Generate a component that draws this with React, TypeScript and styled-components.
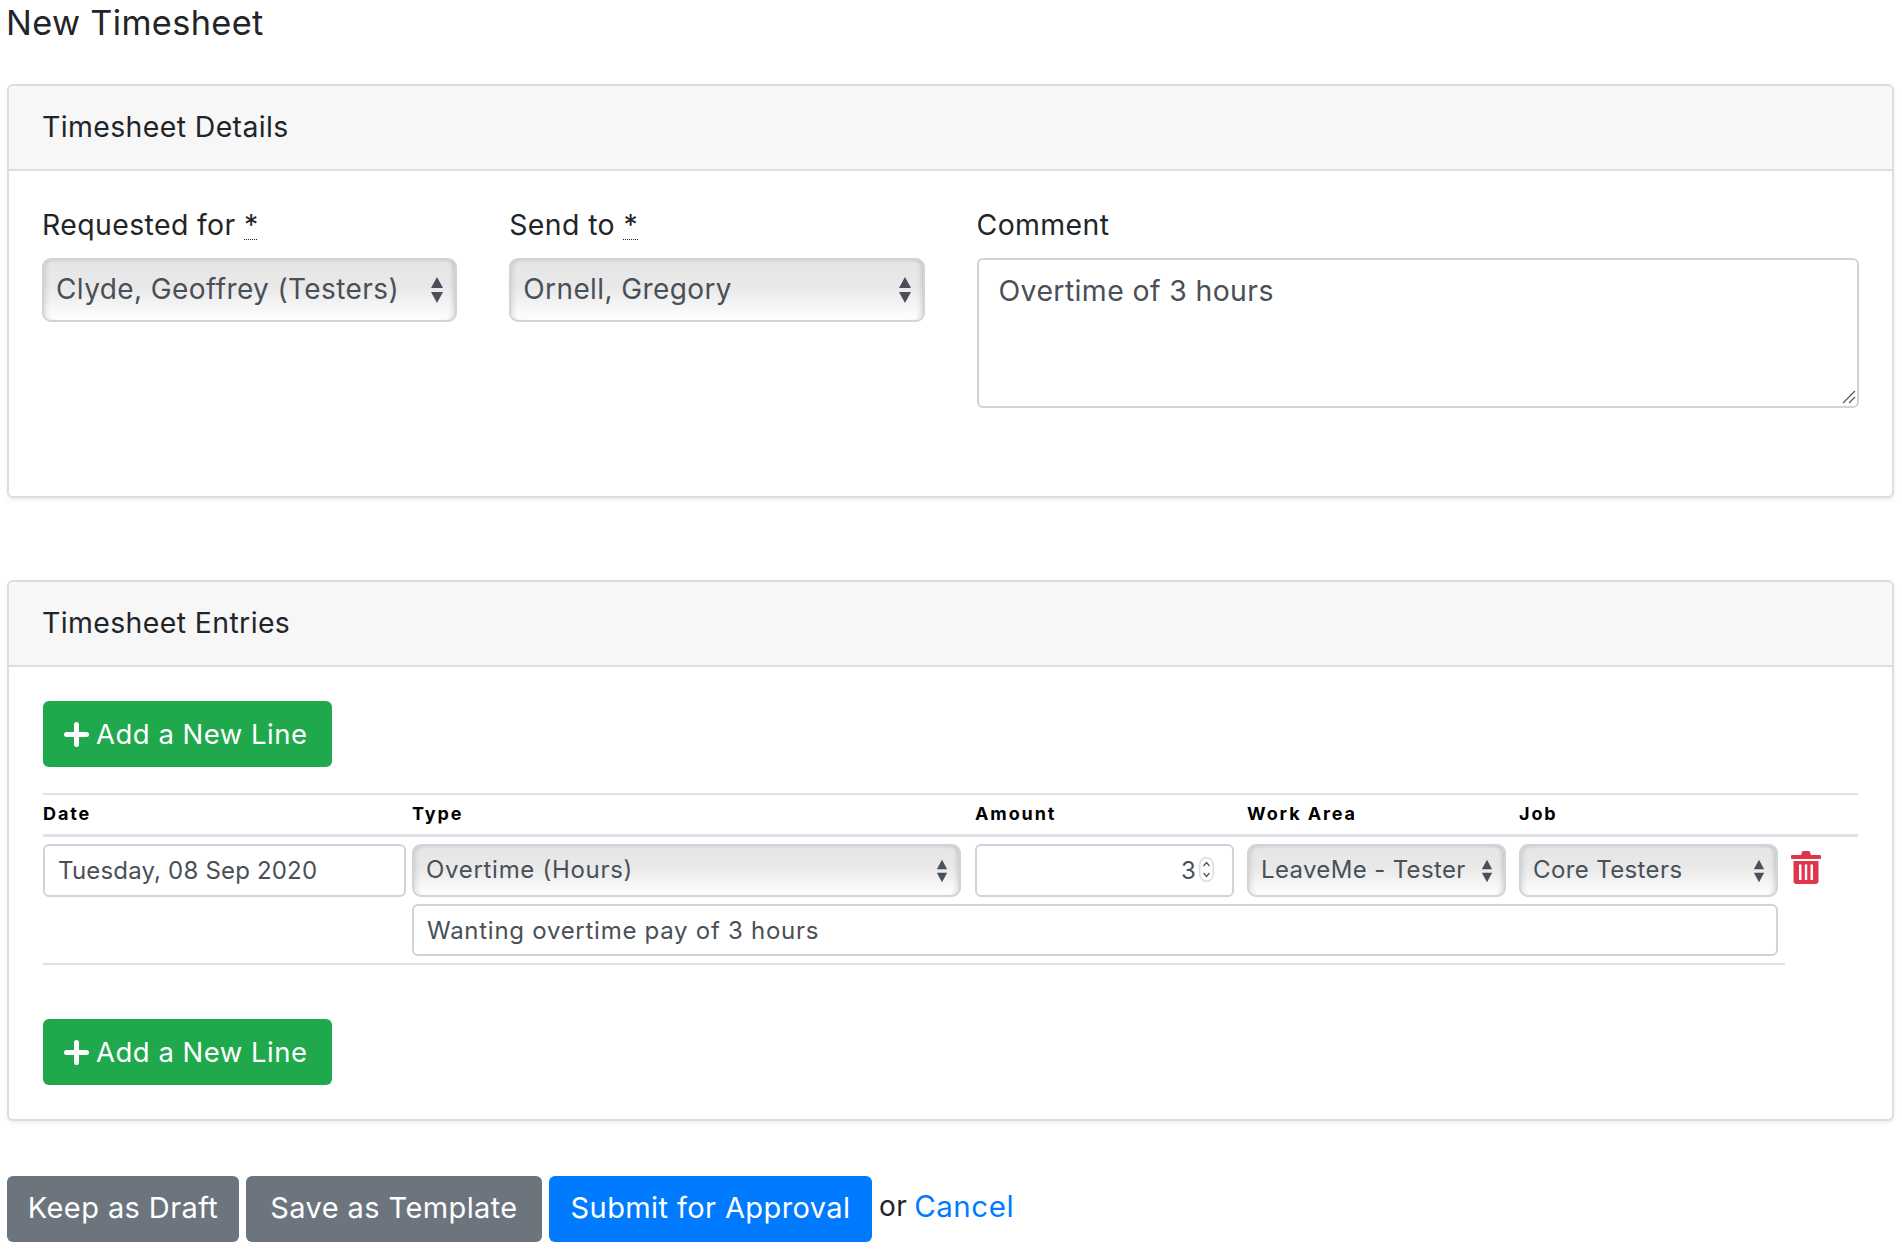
import React from "react";
import styled, { createGlobalStyle } from "styled-components";

const FONT = `Inter, "Noto Sans", "Liberation Sans", sans-serif`;

const Global = createGlobalStyle`
  html, body { margin: 0; padding: 0; background: #fff; }
  body { font-family: ${FONT}; color: #212529; }
  * { box-sizing: border-box; }
`;

const Page = styled.main`
  padding: 0 8px 7px 7px;
`;

const Title = styled.h1`
  margin: 0 0 38px -1px;
  font-size: 34.3px;
  font-weight: 400;
  line-height: 46px;
  letter-spacing: 0.35px;
  color: #212529;
`;

const Card = styled.section`
  border: 2px solid #dcdddd;
  border-radius: 6px;
  box-shadow: 0 2px 4px rgba(0, 0, 0, 0.07);
  background: #fff;
  overflow: hidden;
  & + & { margin-top: 82px; }
`;

const CardHeader = styled.h2`
  margin: 0;
  height: 85px;
  padding: 0 33px 2px;
  display: flex;
  align-items: center;
  background: #f7f7f7;
  border-bottom: 2px solid #dcdddd;
  font-size: 28.4px;
  font-weight: 400;
  letter-spacing: 0.4px;
  color: #212529;
`;

const DetailsBody = styled.div`
  padding: 36px 33px 88px;
  display: grid;
  grid-template-columns: repeat(4, 1fr);
  column-gap: 52px;
`;

const Field = styled.div<{ $span?: number }>`
  grid-column: span ${(p) => p.$span ?? 1};
  display: flex;
  flex-direction: column;
`;

const Label = styled.label`
  display: block;
  font-size: 28.4px;
  line-height: 36px;
  letter-spacing: 0.4px;
  margin-bottom: 15px;
  color: #212529;
`;

const Required = styled.abbr`
  text-decoration: underline dotted;
  text-underline-offset: 4px;
  text-decoration-thickness: 1px;
`;

const SelectWrap = styled.div`
  position: relative;
  width: 100%;
`;

const Select = styled.select<{ $small?: boolean; $track?: number }>`
  appearance: none;
  display: block;
  width: 100%;
  height: ${(p) => (p.$small ? 53 : 64)}px;
  padding: 0 ${(p) => (p.$small ? 34 : 40)}px 2px 12px;
  border: 2px solid #ced4da;
  border-radius: 9px;
  color: #495057;
  font-family: ${FONT};
  font-size: ${(p) => (p.$small ? 24 : 28)}px;
  letter-spacing: ${(p) => p.$track ?? 0.4}px;
  background: linear-gradient(to bottom, #e6e6e6 0%, #e9e9e9 45%, #fbfbfb 92%, #ffffff 100%);
  box-shadow: inset 5px 0 5px -3px rgba(0, 0, 0, 0.1), inset -5px 0 5px -3px rgba(0, 0, 0, 0.14), inset 0 2px 2px rgba(0, 0, 0, 0.04);
`;

const Arrows = styled.svg<{ $small?: boolean }>`
  position: absolute;
  top: 50%;
  right: ${(p) => (p.$small ? 13 : 13)}px;
  width: ${(p) => (p.$small ? 12 : 14)}px;
  height: ${(p) => (p.$small ? 24 : 28)}px;
  transform: translateY(-50%);
  pointer-events: none;
`;

const TextareaWrap = styled.div`
  position: relative;
`;

const Textarea = styled.textarea`
  display: block;
  width: 100%;
  height: 150px;
  padding: 12px 20px;
  border: 2px solid #ced4da;
  border-radius: 6px;
  color: #495057;
  font-family: ${FONT};
  font-size: 28.4px;
  line-height: 38px;
  letter-spacing: 0.4px;
  outline: none;
  resize: none;
`;

const ResizeGrip = styled.svg`
  position: absolute;
  right: 3px;
  bottom: 4px;
  width: 14px;
  height: 14px;
  pointer-events: none;
`;

const EntriesBody = styled.div`
  padding: 34px 34px 34px;
`;

const AddButton = styled.button<{ $bottom?: boolean }>`
  display: flex;
  align-items: center;
  gap: 7px;
  width: 289px;
  height: 66px;
  margin: ${(p) => (p.$bottom ? "54px 0 0" : "0 0 26px")};
  padding: 0 0 0 21px;
  border: none;
  border-radius: 6px;
  background: #20a84d;
  color: #fff;
  font-family: ${FONT};
  font-size: 27.5px;
  letter-spacing: 0.5px;
`;

const PlusIcon = styled.svg`
  width: 25px;
  height: 25px;
  flex: none;
`;

const HeadGrid = styled.div`
  display: grid;
  grid-template-columns: 369px 563px 272px 272px 1fr;
  align-items: center;
  height: 44px;
  padding-bottom: 3px;
  border-top: 2px solid #dee2e6;
  border-bottom: 3px solid #dee2e6;
`;

const HeadCell = styled.div`
  font-size: 18px;
  font-weight: 700;
  letter-spacing: 1.9px;
  color: #000;
`;

const EntryGrid = styled.div`
  display: grid;
  width: 1742px;
  grid-template-columns: 369px 563px 272px 272px 259px 1fr;
  row-gap: 7px;
  padding: 7px 0 7px;
  border-bottom: 2px solid #dee2e6;
`;

const Cell = styled.div<{ $pad: number }>`
  padding-right: ${(p) => p.$pad}px;
  position: relative;
`;

const NoteCell = styled.div`
  grid-column: 2 / 6;
`;

const TextInput = styled.input<{ $right?: boolean; $track?: number; $note?: boolean }>`
  display: block;
  width: 100%;
  height: ${(p) => (p.$note ? 52 : 53)}px;
  padding: 0 ${(p) => (p.$right ? 36 : 13)}px 0 13px;
  border: 2px solid #ced4da;
  border-radius: 6px;
  color: #495057;
  font-family: ${FONT};
  font-size: 24px;
  letter-spacing: ${(p) => p.$track ?? 0.3}px;
  text-align: ${(p) => (p.$right ? "right" : "left")};
  outline: none;
  appearance: textfield;
  &::-webkit-outer-spin-button,
  &::-webkit-inner-spin-button { appearance: none; margin: 0; }
`;

const Spinner = styled.svg`
  position: absolute;
  top: 13px;
  right: 33px;
  width: 15px;
  height: 25px;
  pointer-events: none;
`;

const TrashButton = styled.button`
  border: none;
  background: none;
  padding: 6px 0 0 13px;
  height: 53px;
  display: flex;
  align-items: flex-start;
`;

const TrashIcon = styled.svg`
  width: 30px;
  height: 34px;
`;

const Actions = styled.div`
  display: flex;
  align-items: center;
  gap: 7px;
  margin-top: 55px;
`;

const ActionButton = styled.button<{ $primary?: boolean; $width: number }>`
  width: ${(p) => p.$width}px;
  height: 66px;
  padding: 0 0 4px;
  border: none;
  border-radius: 6px;
  background: ${(p) => (p.$primary ? "#007bff" : "#6c757d")};
  color: #fff;
  font-family: ${FONT};
  font-size: 29px;
  letter-spacing: 0.4px;
`;

const OrText = styled.span`
  margin: 0 0 6px 0;
  font-size: 28px;
  letter-spacing: 0.4px;
  color: #212529;
`;

const CancelLink = styled.a`
  margin: 0 0 6px 0;
  color: #007bff;
  font-size: 29.5px;
  letter-spacing: 0.55px;
  text-decoration: none;
`;

const SelectBox = ({ value, small, track }: { value: string; small?: boolean; track?: number }) => (
  <SelectWrap>
    <Select $small={small} $track={track} defaultValue={value}>
      <option>{value}</option>
    </Select>
    <Arrows $small={small} viewBox="0 0 14 28" aria-hidden="true">
      <path d="M7 1 L13 12 H1 Z M1 16 H13 L7 27 Z" fill="#495057" />
    </Arrows>
  </SelectWrap>
);

const Plus = () => (
  <PlusIcon viewBox="0 0 25 25" aria-hidden="true">
    <path d="M10 2.5 a2.5 2.5 0 0 1 5 0 V10 H22.5 a2.5 2.5 0 0 1 0 5 H15 V22.5 a2.5 2.5 0 0 1 -5 0 V15 H2.5 a2.5 2.5 0 0 1 0 -5 H10 Z" fill="#fff" />
  </PlusIcon>
);

export default function App() {
  return (
    <Page>
      <Global />
      <Title>New Timesheet</Title>

      <Card>
        <CardHeader>Timesheet Details</CardHeader>
        <DetailsBody>
          <Field>
            <Label>Requested for <Required title="required">*</Required></Label>
            <SelectBox value="Clyde, Geoffrey (Testers)" />
          </Field>
          <Field>
            <Label>Send to <Required title="required">*</Required></Label>
            <SelectBox value="Ornell, Gregory" />
          </Field>
          <Field $span={2}>
            <Label>Comment</Label>
            <TextareaWrap>
              <Textarea defaultValue="Overtime of 3 hours" />
              <ResizeGrip viewBox="0 0 14 14" aria-hidden="true">
                <path d="M1 13 L13 1 M7 13 L13 7" stroke="#555" strokeWidth="1.2" fill="none" />
              </ResizeGrip>
            </TextareaWrap>
          </Field>
        </DetailsBody>
      </Card>

      <Card>
        <CardHeader>Timesheet Entries</CardHeader>
        <EntriesBody>
          <AddButton><Plus />Add a New Line</AddButton>
          <HeadGrid>
            <HeadCell>Date</HeadCell>
            <HeadCell>Type</HeadCell>
            <HeadCell>Amount</HeadCell>
            <HeadCell>Work Area</HeadCell>
            <HeadCell>Job</HeadCell>
          </HeadGrid>
          <EntryGrid>
            <Cell $pad={6}><TextInput $track={0.18} defaultValue="Tuesday, 08 Sep 2020" /></Cell>
            <Cell $pad={14}><SelectBox small track={0.7} value="Overtime (Hours)" /></Cell>
            <Cell $pad={13}>
              <TextInput $right type="number" defaultValue={3} />
              <Spinner viewBox="0 0 15 25" aria-hidden="true">
                <rect x="0.75" y="0.75" width="13.5" height="23.5" rx="6.7" fill="#fff" stroke="#d9dce0" strokeWidth="1.5" />
                <path d="M4.5 9 L7.5 5.5 L10.5 9 M4.5 16 L7.5 19.5 L10.5 16" fill="none" stroke="#495057" strokeWidth="1.2" />
              </Spinner>
            </Cell>
            <Cell $pad={13}><SelectBox small track={0.35} value="LeaveMe - Tester" /></Cell>
            <Cell $pad={0}><SelectBox small track={0.38} value="Core Testers" /></Cell>
            <TrashButton aria-label="Delete line">
              <TrashIcon viewBox="0 0 30 34" aria-hidden="true">
                <path d="M1 5 H10 L11 2 Q11.3 1 12.5 1 H17.5 Q18.7 1 19 2 L20 5 H29 Q30 5 30 6 V8 Q30 9 29 9 H1 Q0 9 0 8 V6 Q0 5 1 5 Z" fill="#e0364c" />
                <path fillRule="evenodd" d="M2.5 11 H27.5 V31 Q27.5 34 24.5 34 H5.5 Q2.5 34 2.5 31 Z M8 14.5 V30 H10.5 V14.5 Z M13.8 14.5 V30 H16.2 V14.5 Z M19.5 14.5 V30 H22 V14.5 Z" fill="#e0364c" />
              </TrashIcon>
            </TrashButton>
            <NoteCell><TextInput $note $track={0.73} defaultValue="Wanting overtime pay of 3 hours" /></NoteCell>
          </EntryGrid>
          <AddButton $bottom><Plus />Add a New Line</AddButton>
        </EntriesBody>
      </Card>

      <Actions>
        <ActionButton $width={232}>Keep as Draft</ActionButton>
        <ActionButton $width={296}>Save as Template</ActionButton>
        <ActionButton $primary $width={323}>Submit for Approval</ActionButton>
        <OrText>or</OrText>
        <CancelLink href="#">Cancel</CancelLink>
      </Actions>
    </Page>
  );
}
